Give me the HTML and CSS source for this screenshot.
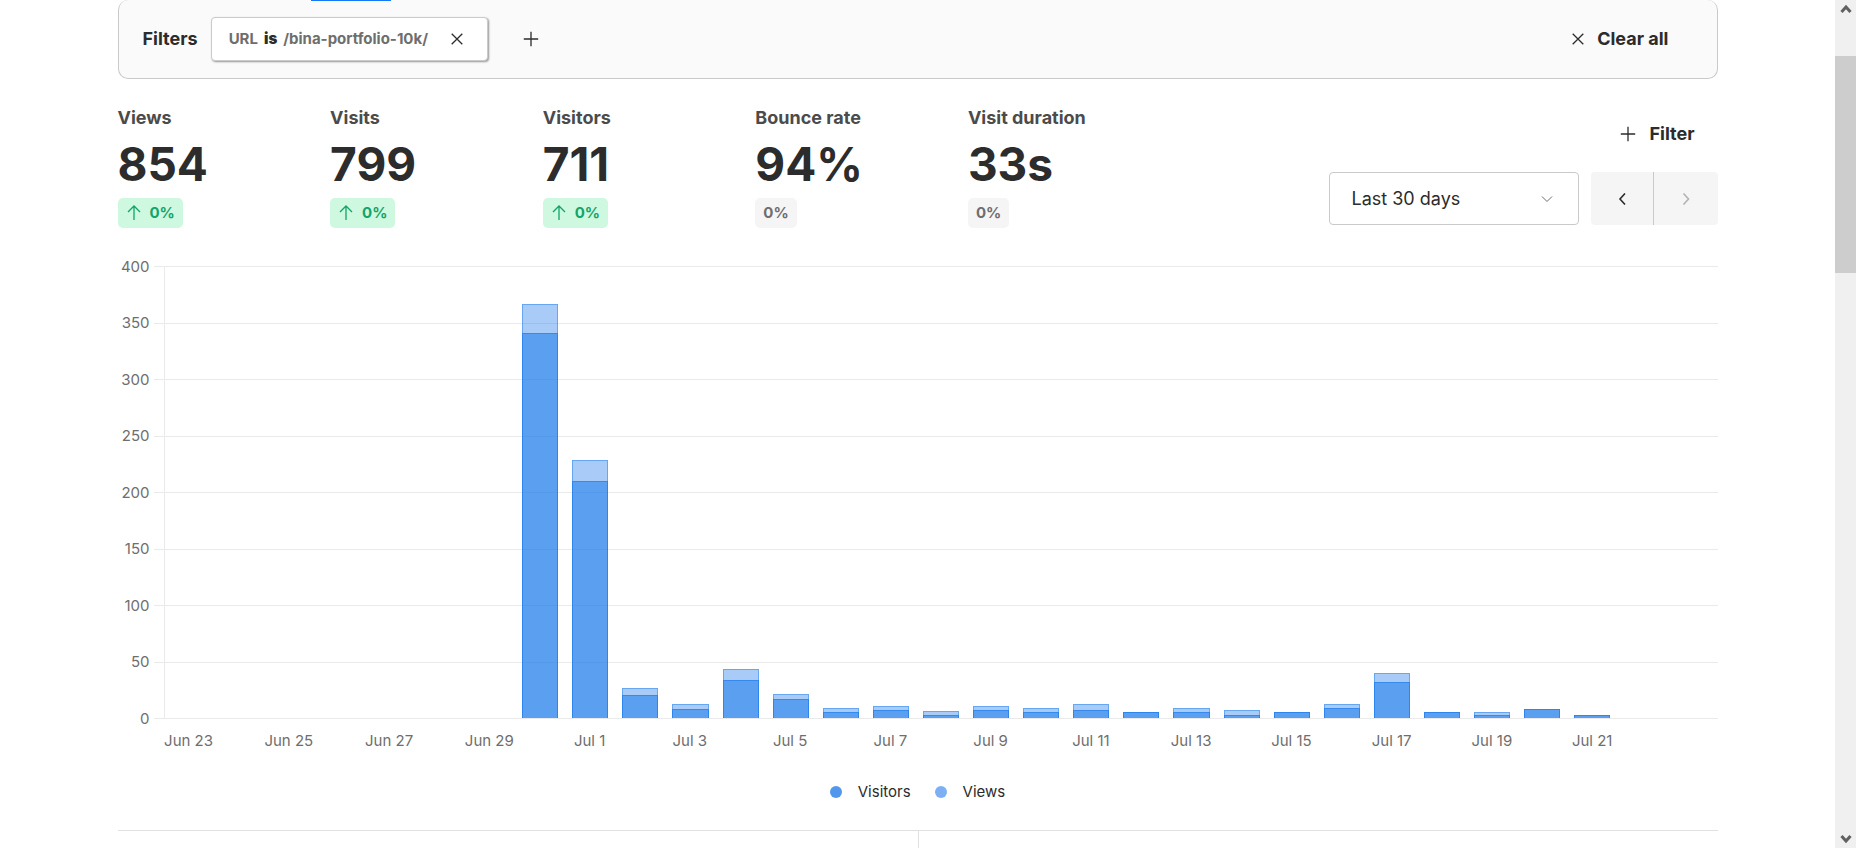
FILE: index.html
```html
<!DOCTYPE html>
<html lang="en">
<head>
  <meta charset="UTF-8">
  <meta name="viewport" content="width=device-width, initial-scale=1.0">
  <title>Website statistics</title>
  <link rel="stylesheet" href="styles.css">
</head>
<body>

  <div class="page">
    <div class="filter-bar">
      <div class="tab-indicator"></div>
      <div class="filter-title">Filters</div>
      <div class="filter-tag">
        <span>URL</span>
        <b>is</b>
        <span>/bina-portfolio-10k/</span>
        <button type="button" class="icon-button remove-filter" aria-label="Remove filter">
          <svg class="icon icon-small" viewBox="0 0 12 12"><path d="M.7.7l10.600 10.600M11.300.7L.7 11.300"/></svg>
        </button>
      </div>
      <button type="button" class="icon-button add-filter" aria-label="Add filter">
        <svg class="icon" viewBox="0 0 16 16"><path d="M8 .8v14.400M.8 8h14.400"/></svg>
      </button>
      <button type="button" class="text-button clear-all">
        <svg class="icon icon-small" viewBox="0 0 12 12"><path d="M.7.7l10.600 10.600M11.300.7L.7 11.300"/></svg>
        <span>Clear all</span>
      </button>
    </div>

    <div class="summary">
      <div class="metrics">
        <div class="metric">
          <div class="metric-label">Views</div>
          <div class="metric-value">854</div>
          <div class="change positive">
            <svg class="icon" viewBox="0 0 16 16"><path d="M8 15V1M2 7l6-6 6 6"/></svg>
            <span>0%</span>
          </div>
        </div>
        <div class="metric">
          <div class="metric-label">Visits</div>
          <div class="metric-value">799</div>
          <div class="change positive">
            <svg class="icon" viewBox="0 0 16 16"><path d="M8 15V1M2 7l6-6 6 6"/></svg>
            <span>0%</span>
          </div>
        </div>
        <div class="metric">
          <div class="metric-label">Visitors</div>
          <div class="metric-value">711</div>
          <div class="change positive">
            <svg class="icon" viewBox="0 0 16 16"><path d="M8 15V1M2 7l6-6 6 6"/></svg>
            <span>0%</span>
          </div>
        </div>
        <div class="metric">
          <div class="metric-label">Bounce rate</div>
          <div class="metric-value">94%</div>
          <div class="change"><span>0%</span></div>
        </div>
        <div class="metric">
          <div class="metric-label">Visit duration</div>
          <div class="metric-value">33s</div>
          <div class="change"><span>0%</span></div>
        </div>
      </div>

      <div class="controls">
        <button type="button" class="text-button new-filter">
          <svg class="icon" viewBox="0 0 16 16"><path d="M8 .8v14.400M.8 8h14.400"/></svg>
          <span>Filter</span>
        </button>
        <div class="date-controls">
          <div class="date-select">
            <select aria-label="Date range">
              <option>Last 30 days</option>
            </select>
            <svg class="icon select-arrow" viewBox="0 0 12 12"><path d="M1 3.500l5 5 5-5"/></svg>
          </div>
          <div class="date-nav">
            <button type="button" aria-label="Previous period">
              <svg class="icon icon-small" viewBox="0 0 12 12"><path d="M9 .5L4 6l5 5.500"/></svg>
            </button>
            <button type="button" aria-label="Next period" disabled>
              <svg class="icon icon-small" viewBox="0 0 12 12"><path d="M3.500 .5l5 5.500-5 5.500"/></svg>
            </button>
          </div>
        </div>
      </div>
    </div>

    <div class="chart">
      <div class="y-axis">
        <div class="tick"><span>400</span></div>
        <div class="tick"><span>350</span></div>
        <div class="tick"><span>300</span></div>
        <div class="tick"><span>250</span></div>
        <div class="tick"><span>200</span></div>
        <div class="tick"><span>150</span></div>
        <div class="tick"><span>100</span></div>
        <div class="tick"><span>50</span></div>
        <div class="tick"><span>0</span></div>
      </div>

      <!-- one column per day, Jun 23 to Jul 23 -->
      <div class="bars">
        <div class="day"></div>
        <div class="day"></div>
        <div class="day"></div>
        <div class="day"></div>
        <div class="day"></div>
        <div class="day"></div>
        <div class="day"></div>
        <div class="day" style="--views: 366; --visitors: 341"></div>
        <div class="day" style="--views: 228; --visitors: 210"></div>
        <div class="day" style="--views: 27; --visitors: 20"></div>
        <div class="day" style="--views: 12; --visitors: 8"></div>
        <div class="day" style="--views: 43; --visitors: 34"></div>
        <div class="day" style="--views: 21; --visitors: 17"></div>
        <div class="day" style="--views: 9; --visitors: 5"></div>
        <div class="day" style="--views: 11; --visitors: 7"></div>
        <div class="day" style="--views: 6; --visitors: 3"></div>
        <div class="day" style="--views: 11; --visitors: 7"></div>
        <div class="day" style="--views: 9; --visitors: 5"></div>
        <div class="day" style="--views: 12; --visitors: 7"></div>
        <div class="day" style="--views: 5; --visitors: 5"></div>
        <div class="day" style="--views: 9; --visitors: 5"></div>
        <div class="day" style="--views: 7; --visitors: 3"></div>
        <div class="day" style="--views: 5; --visitors: 5"></div>
        <div class="day" style="--views: 12; --visitors: 9"></div>
        <div class="day" style="--views: 40; --visitors: 32"></div>
        <div class="day" style="--views: 5; --visitors: 5"></div>
        <div class="day" style="--views: 5; --visitors: 3"></div>
        <div class="day" style="--views: 8; --visitors: 8"></div>
        <div class="day" style="--views: 3; --visitors: 3"></div>
        <div class="day"></div>
        <div class="day"></div>
      </div>

      <div class="x-axis">
        <span>Jun 23</span><span></span>
        <span>Jun 25</span><span></span>
        <span>Jun 27</span><span></span>
        <span>Jun 29</span><span></span>
        <span>Jul 1</span><span></span>
        <span>Jul 3</span><span></span>
        <span>Jul 5</span><span></span>
        <span>Jul 7</span><span></span>
        <span>Jul 9</span><span></span>
        <span>Jul 11</span><span></span>
        <span>Jul 13</span><span></span>
        <span>Jul 15</span><span></span>
        <span>Jul 17</span><span></span>
        <span>Jul 19</span><span></span>
        <span>Jul 21</span><span></span>
        <span></span>
      </div>
    </div>

    <div class="legend">
      <div class="legend-item"><i class="dot dot-visitors"></i>Visitors</div>
      <div class="legend-item"><i class="dot dot-views"></i>Views</div>
    </div>

    <div class="tables">
      <div class="table-column"></div>
      <div class="table-column"></div>
    </div>
  </div>

  <div class="scrollbar">
    <svg class="scroll-arrow" viewBox="0 0 12 10"><path d="M1.500 8L6 3l4.500 5"/></svg>
    <div class="scroll-track"><div class="scroll-thumb"></div></div>
    <svg class="scroll-arrow" viewBox="0 0 12 10"><path d="M1.500 2L6 7l4.500-5"/></svg>
  </div>

</body>
</html>
```
FILE: styles.css
```css
:root {
  --font-color: #2c2c2c;
  --gray-50: #fafafa;
  --gray-75: #f5f5f5;
  --gray-200: #eaeaea;
  --gray-300: #e1e1e1;
  --gray-400: #cacaca;
  --gray-700: #6e6e6e;
  --gray-800: #4b4b4b;
  --blue: #147af3;
  --green: #12a468;
  --green-light: #cef8e0;
}

*,
*::before,
*::after {
  box-sizing: border-box;
}

body {
  margin: 0;
  display: flex;
  height: 100vh;
  overflow: hidden;
  font-family: Inter, sans-serif;
  font-size: 18px;
  line-height: 24px;
  color: var(--font-color);
  background: #fff;
}

button,
select {
  font: inherit;
  color: inherit;
  border: 0;
  background: none;
  padding: 0;
}

.page {
  flex: 1;
  display: flex;
  flex-direction: column;
  max-width: 1600px;
  margin: 0 auto;
}

.icon {
  width: 16px;
  height: 16px;
  fill: none;
  stroke: currentColor;
  stroke-width: 1.3;
  flex-shrink: 0;
}

.icon-small {
  width: 12px;
  height: 12px;
}

/* Filters */
.filter-bar {
  position: relative;
  display: flex;
  align-items: center;
  height: 79px;
  padding: 0 24px;
  border: 1px solid var(--gray-400);
  border-top: 0;
  border-radius: 10px;
  background: var(--gray-50);
  flex-shrink: 0;
}

/* Underline of the selected tab, lies over the edge of the filter bar */
.tab-indicator {
  position: absolute;
  top: 0;
  left: 192px;
  width: 80px;
  height: 1px;
  background: var(--blue);
}

.filter-title {
  font-weight: 700;
  margin-right: 13px;
}

.filter-tag {
  display: flex;
  align-items: center;
  gap: 6px;
  height: 44px;
  padding: 0 24px 0 17px;
  font-size: 15px;
  font-weight: 700;
  color: var(--gray-700);
  background: #fff;
  border: 1px solid var(--gray-400);
  border-radius: 4px;
  box-shadow: 1px 1px 2px rgba(0, 0, 0, 0.4);
}

.filter-tag b {
  color: var(--font-color);
}

.icon-button {
  display: flex;
  color: var(--font-color);
}

.remove-filter {
  margin-left: 17px;
}

.add-filter {
  margin-left: 35px;
}

.text-button {
  display: flex;
  align-items: center;
  gap: 13px;
  font-weight: 700;
}

.clear-all {
  margin-left: auto;
  margin-right: 24px;
}

/* Metrics */
.summary {
  display: flex;
  justify-content: space-between;
  padding-top: 27px;
  flex-shrink: 0;
}

.metrics {
  flex: 1;
  display: grid;
  grid-template-columns: repeat(5, 1fr);
  max-width: 1063px;
}

.metric {
  display: flex;
  flex-direction: column;
  align-items: flex-start;
}

.metric-label {
  font-weight: 700;
  color: var(--gray-800);
}

.metric-value {
  font-size: 46px;
  font-weight: 700;
  line-height: 68px;
}

.change {
  display: flex;
  align-items: center;
  gap: 8px;
  height: 30px;
  padding: 0 8px;
  border-radius: 5px;
  font-size: 15px;
  font-weight: 700;
  color: var(--gray-700);
  background: var(--gray-75);
}

.change.positive {
  color: var(--green);
  background: var(--green-light);
}

.controls {
  display: flex;
  flex-direction: column;
  align-items: flex-end;
  gap: 26px;
  padding-top: 16px;
}

.new-filter {
  margin-right: 23px;
}

.date-controls {
  display: flex;
  gap: 12px;
}

.date-select {
  display: grid;
  align-items: center;
  width: 250px;
  height: 53px;
  border: 1px solid var(--gray-400);
  border-radius: 4px;
}

.date-select select {
  grid-area: 1 / 1;
  height: 100%;
  padding: 0 22px;
  appearance: none;
}

.select-arrow {
  grid-area: 1 / 1;
  justify-self: end;
  width: 12px;
  height: 12px;
  margin-right: 25px;
  stroke-width: 1;
  color: var(--gray-700);
  pointer-events: none;
}

.date-nav {
  display: flex;
  border-radius: 4px;
  background: var(--gray-75);
}

.date-nav button {
  display: flex;
  align-items: center;
  justify-content: center;
  width: 64px;
}

.date-nav button:first-child {
  width: 63px;
  border-right: 1px solid var(--gray-400);
}

.date-nav .icon {
  stroke-width: 1.6;
}

.date-nav button:disabled {
  color: #b3b3b3;
}

/* Chart */
.chart {
  display: grid;
  grid-template-columns: 46px 1fr;
  grid-template-rows: 453px auto;
  margin-top: 38px;
  font-size: 15px;
  line-height: 20px;
  color: var(--gray-700);
  flex-shrink: 0;
}

.y-axis {
  grid-area: 1 / 1 / 2 / 3;
  display: flex;
  flex-direction: column;
  justify-content: space-between;
}

.tick {
  display: flex;
  align-items: center;
  gap: 4px;
  height: 1px;
}

.tick span {
  width: 32px;
  text-align: right;
}

.tick::after {
  content: '';
  flex: 1;
  height: 1px;
  background: var(--gray-200);
}

.bars {
  grid-area: 1 / 2;
  display: grid;
  grid-template-columns: repeat(31, 1fr);
  margin-bottom: 1px;
  border-left: 1px solid var(--gray-200);
}

.day {
  display: grid;
  grid-template-rows: 100%;
  align-items: end;
  padding: 0 7px;
}

.day[style]::before,
.day[style]::after {
  content: '';
  grid-area: 1 / 1;
}

.day[style]::before {
  height: calc(var(--views) / 400 * 100%);
  background: rgba(38, 128, 235, 0.4);
  border: 1px solid rgba(38, 128, 235, 0.5);
  border-bottom: 0;
}

.day[style]::after {
  height: calc(var(--visitors) / 400 * 100%);
  background: rgba(38, 128, 235, 0.6);
  border: 1px solid rgba(38, 128, 235, 0.7);
  border-bottom: 0;
}

.x-axis {
  grid-area: 2 / 2;
  display: grid;
  grid-template-columns: repeat(31, 1fr);
  padding-top: 12px;
}

.x-axis span {
  display: flex;
  justify-content: center;
  min-width: 0;
  white-space: nowrap;
}

.legend {
  display: flex;
  justify-content: center;
  gap: 24px;
  padding-top: 31px;
  font-size: 15px;
  line-height: 20px;
  flex-shrink: 0;
}

.legend-item {
  display: flex;
  align-items: center;
  gap: 16px;
}

.dot {
  width: 12px;
  height: 12px;
  border-radius: 50%;
}

.dot-visitors {
  background: #5197ee;
}

.dot-views {
  background: #7db0f3;
}

.tables {
  flex: 1;
  display: grid;
  grid-template-columns: 1fr 1fr;
  margin-top: 28px;
  border-top: 1px solid var(--gray-300);
}

.table-column + .table-column {
  border-left: 1px solid var(--gray-300);
}

/* Scrollbar */
.scrollbar {
  display: flex;
  flex-direction: column;
  align-items: center;
  width: 21px;
  padding: 4px 0;
  background: #f0f0f0;
}

.scroll-arrow {
  width: 12px;
  height: 10px;
  fill: none;
  stroke: #606060;
  stroke-width: 3;
}

.scroll-track {
  flex: 1;
  width: 100%;
  padding-top: 42px;
}

.scroll-thumb {
  height: 217px;
  background: #cdcdcd;
}
```
